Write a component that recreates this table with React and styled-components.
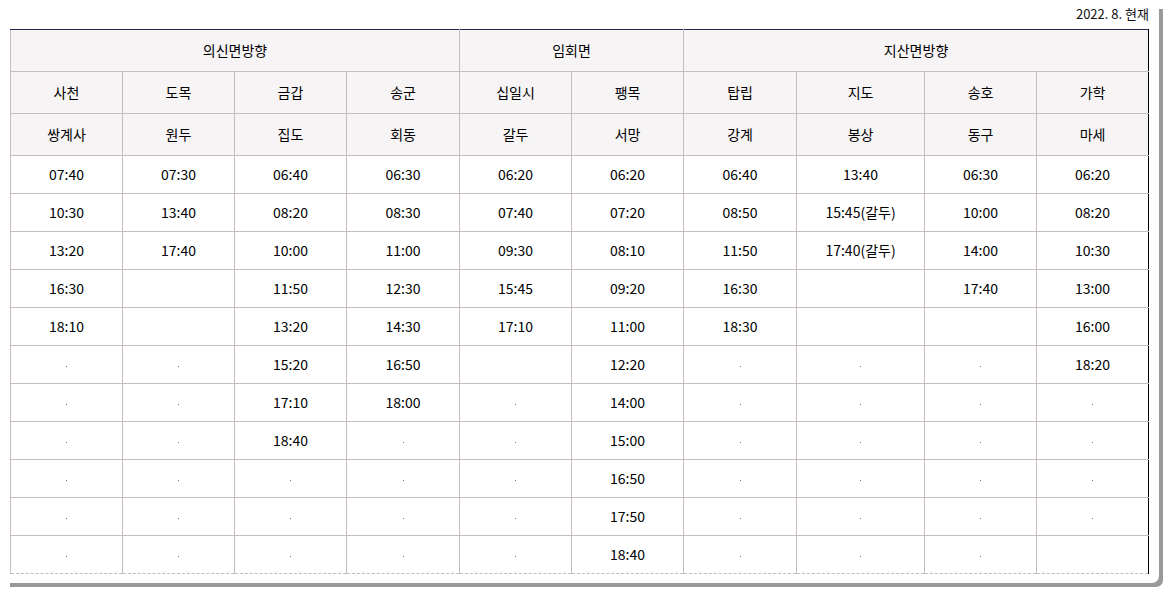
import React from "react";
import styled, { createGlobalStyle } from "styled-components";

const Global = createGlobalStyle`
  html, body { margin: 0; padding: 0; background: #fff; }
  body {
    font-family: "Noto Sans CJK KR", "Noto Sans", sans-serif;
    color: #111;
    padding: 5px 0 6px;
    min-height: 589px;
    box-sizing: border-box;
  }
`;

const Frame = styled.div`
  margin: 0 0 0 6px;
  width: 1153px;
  height: 578px;
  box-sizing: border-box;
  padding: 0 10px 0 4px;
  background: #fff;
  border-radius: 0 0 7px 0;
  box-shadow: 4px 4px 0 0 #999999;
`;

const Stamp = styled.div`
  height: 24px;
  line-height: 17px;
  text-align: right;
  font-size: 13px;
  color: #111;
`;

const Table = styled.table`
  width: 1139px;
  table-layout: fixed;
  border-collapse: collapse;
  font-size: 14px;
  border-top: 1px solid #2e2650;
  border-left: 1px solid #c7bcc0;
  border-right: 1px solid #000;
  border-bottom: 1px dashed #bdbdbd;
`;

const Th = styled.th`
  height: 39px;
  padding: 0 0 2px;
  background: #f6f4f5;
  font-weight: 400;
  color: #000;
  text-align: center;
  vertical-align: middle;
  border: 1px solid #c7bcc0;
  border-top: ${(p) => (p.$first ? "1px solid #2e2650" : "1px solid #c7bcc0")};
  border-right: ${(p) => (p.$last ? "1px solid #000" : "1px solid #c7bcc0")};
`;

const Td = styled.td`
  height: 36px;
  padding: 0 0 1px;
  color: #000;
  text-align: center;
  vertical-align: middle;
  border-left: 1px solid #c7bcc0;
  border-right: ${(p) => (p.$last ? "1px solid #000" : "1px solid #c7bcc0")};
  border-bottom: ${(p) => (p.$bottom ? "1px dashed #bdbdbd" : "1px solid #c7bcc0")};
`;

const Dot = styled.span`
  display: inline-block;
  width: 1px;
  height: 1px;
  vertical-align: middle;
  background: ${(p) => p.$c};
`;

const widths = [112, 112, 112, 113, 112, 112, 113, 128, 112, 112];

const stops1 = ["사천", "도목", "금갑", "송군", "십일시", "팽목", "탑립", "지도", "송호", "가학"];
const stops2 = ["쌍계사", "원두", "집도", "회동", "갈두", "서망", "강계", "봉상", "동구", "마세"];

// "" = blank, "." = dot
const cols = [
  ["07:40", "10:30", "13:20", "16:30", "18:10", ".", ".", ".", ".", ".", "."],
  ["07:30", "13:40", "17:40", "", "", ".", ".", ".", ".", ".", "."],
  ["06:40", "08:20", "10:00", "11:50", "13:20", "15:20", "17:10", "18:40", ".", ".", "."],
  ["06:30", "08:30", "11:00", "12:30", "14:30", "16:50", "18:00", ".", ".", ".", "."],
  ["06:20", "07:40", "09:30", "15:45", "17:10", "", ".", ".", ".", ".", "."],
  ["06:20", "07:20", "08:10", "09:20", "11:00", "12:20", "14:00", "15:00", "16:50", "17:50", "18:40"],
  ["06:40", "08:50", "11:50", "16:30", "18:30", ".", ".", ".", ".", ".", "."],
  ["13:40", "15:45(갈두)", "17:40(갈두)", "", "", ".", ".", ".", ".", ".", "."],
  ["06:30", "10:00", "14:00", "17:40", "", ".", ".", ".", ".", ".", "."],
  ["06:20", "08:20", "10:30", "13:00", "16:00", "18:20", ".", ".", ".", ".", ""],
];

export default function App() {
  const rows = cols[0].map((_, r) => cols.map((c) => c[r]));
  return (
    <>
      <Global />
      <Frame>
        <Stamp>2022. 8. 현재</Stamp>
        <Table>
          <colgroup>
            {widths.map((w, i) => (
              <col key={i} style={{ width: w }} />
            ))}
          </colgroup>
          <thead>
            <tr>
              <Th $first colSpan={4}>의신면방향</Th>
              <Th $first colSpan={2}>임회면</Th>
              <Th $first $last colSpan={4}>지산면방향</Th>
            </tr>
            <tr>
              {stops1.map((s, i) => (
                <Th key={s} $last={i === 9}>{s}</Th>
              ))}
            </tr>
            <tr>
              {stops2.map((s, i) => (
                <Th key={s} $last={i === 9}>{s}</Th>
              ))}
            </tr>
          </thead>
          <tbody>
            {rows.map((row, r) => (
              <tr key={r}>
                {row.map((v, i) => (
                  <Td key={i} $last={i === 9} $bottom={r === rows.length - 1}>
                    {v === "." ? <Dot $c={i === 0 ? "#6b6bb5" : "#a86a55"} /> : v}
                  </Td>
                ))}
              </tr>
            ))}
          </tbody>
        </Table>
      </Frame>
    </>
  );
}
